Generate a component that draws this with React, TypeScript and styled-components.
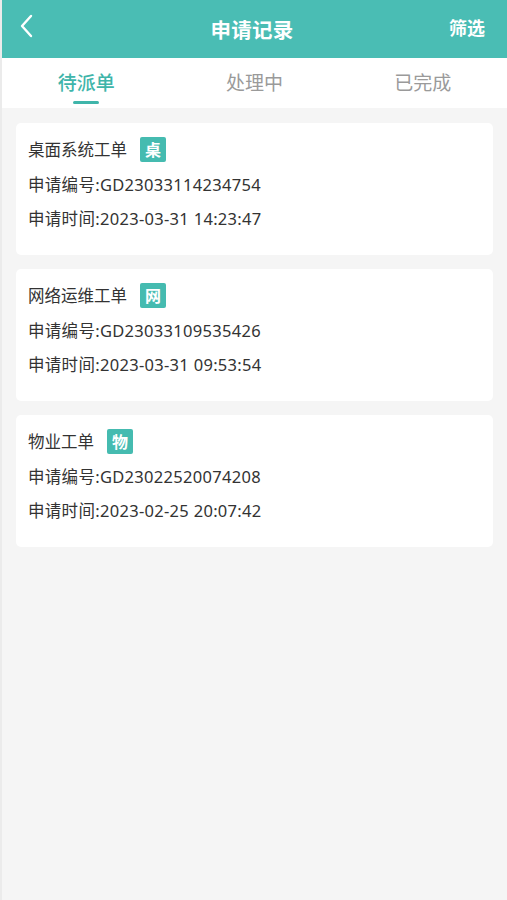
import React from "react";
import styled, { createGlobalStyle } from "styled-components";

const GlobalStyle = createGlobalStyle`
  html, body {
    margin: 0;
    padding: 0;
    background: #f5f5f5;
    font-family: "Noto Sans", "Noto Sans CJK SC", sans-serif;
  }
`;

const Page = styled.div`
  min-height: 900px;
  background: #f5f5f5;
  border-left: 2px solid #ebebeb;
`;

const Header = styled.div`
  height: 58px;
  background: #4abdb4;
  display: flex;
  align-items: center;
  justify-content: space-between;
  padding: 0 22px 0 17px;
  box-sizing: border-box;
`;

const BackBtn = styled.div`
  width: 44px;
  display: flex;
  align-items: center;
  margin-top: -6px;
`;

const Title = styled.div`
  color: #fff;
  font-size: 20.5px;
  font-weight: 700;
  letter-spacing: 0.3px;
`;

const Filter = styled.div`
  width: 44px;
  text-align: right;
  color: #fff;
  font-size: 18px;
  font-weight: 700;
  margin-top: -4px;
`;

const Tabs = styled.div`
  height: 50px;
  background: #fff;
  display: grid;
  grid-template-columns: repeat(3, 1fr);
`;

const Tab = styled.div<{ $active?: boolean }>`
  position: relative;
  display: flex;
  justify-content: center;
  align-items: center;
  padding-bottom: 2px;
  font-size: 19px;
  color: ${({ $active }) => ($active ? "#3fb5aa" : "#9a9a9a")};
  font-weight: ${({ $active }) => ($active ? 500 : 400)};
  &::after {
    content: "";
    display: ${({ $active }) => ($active ? "block" : "none")};
    position: absolute;
    bottom: 4px;
    left: 50%;
    transform: translateX(-50%);
    width: 26px;
    height: 3px;
    border-radius: 2px;
    background: #3fb5aa;
  }
`;

const List = styled.div`
  display: flex;
  flex-direction: column;
  gap: 14px;
  padding: 15px 14px 0 14px;
`;

const Card = styled.div`
  background: #fff;
  border-radius: 5px;
  padding: 13px 12px 25px;
`;

const TitleRow = styled.div`
  display: flex;
  align-items: center;
  height: 26px;
  gap: 13px;
  font-size: 16.5px;
  color: #333;
`;

const Badge = styled.span`
  width: 26px;
  height: 25px;
  border-radius: 2px;
  background: #45bbb0;
  color: #fff;
  font-size: 16px;
  font-weight: 700;
  display: flex;
  align-items: center;
  justify-content: center;
`;

const Line = styled.div`
  margin-top: 12px;
  line-height: 22px;
  font-size: 16.5px;
  letter-spacing: 0.3px;
  color: #333;
`;

const orders = [
  { type: "桌面系统工单", tag: "桌", no: "GD23033114234754", time: "2023-03-31 14:23:47" },
  { type: "网络运维工单", tag: "网", no: "GD23033109535426", time: "2023-03-31 09:53:54" },
  { type: "物业工单", tag: "物", no: "GD23022520074208", time: "2023-02-25 20:07:42" },
];

export default function App() {
  return (
    <Page>
      <GlobalStyle />
      <Header>
        <BackBtn>
          <svg width="14" height="24" viewBox="0 0 14 24" fill="none">
            <path d="M12 2 L3 12 L12 22" stroke="#fff" strokeWidth="2.4" strokeLinecap="round" strokeLinejoin="round" />
          </svg>
        </BackBtn>
        <Title>申请记录</Title>
        <Filter>筛选</Filter>
      </Header>
      <Tabs>
        <Tab $active>待派单</Tab>
        <Tab>处理中</Tab>
        <Tab>已完成</Tab>
      </Tabs>
      <List>
        {orders.map((o) => (
          <Card key={o.no}>
            <TitleRow>
              {o.type}
              <Badge>{o.tag}</Badge>
            </TitleRow>
            <Line>申请编号:{o.no}</Line>
            <Line>申请时间:{o.time}</Line>
          </Card>
        ))}
      </List>
    </Page>
  );
}
